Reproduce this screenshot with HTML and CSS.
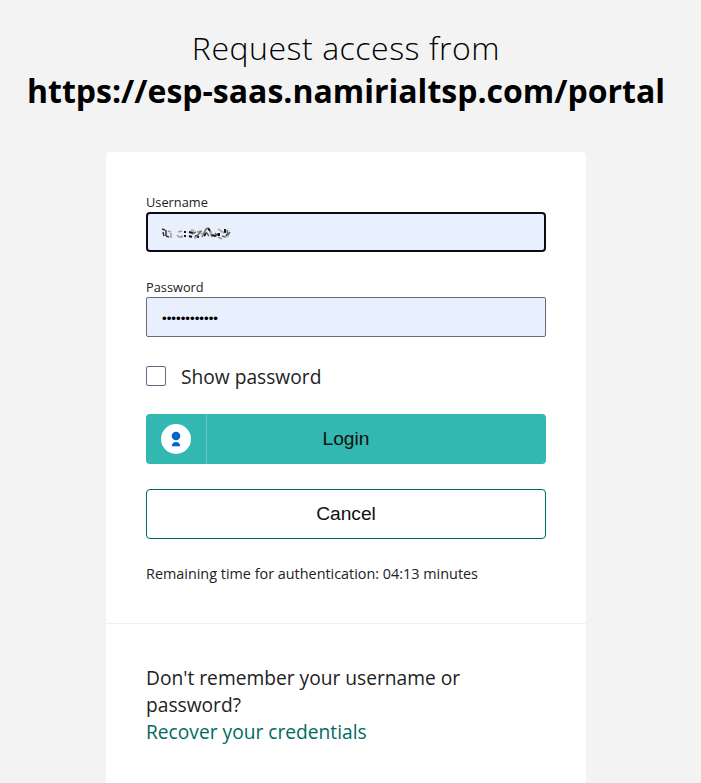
FILE: index.html
```html
<!DOCTYPE html>
<html lang="en">

<head>
  <meta charset="UTF-8">
  <meta name="viewport" content="width=device-width">
  <title>Request access</title>
  <link rel="stylesheet" href="styles.css">
</head>

<body>
  <main class="page">
    <h1 class="heading">Request access from <strong>https://esp-saas.namirialtsp.com/portal</strong></h1>
    <div class="panel">
      <form class="login">
        <label class="label" for="username">Username</label>
        <div class="field field-focus" id="username">
          <svg class="scribble" width="70" height="18" viewBox="0 0 70 18" fill="none" stroke="#333">
            <path stroke-width="1.500" d="M1 5l3 1M2 8l1 4M5 6v6M5 12l3 1"/>
            <path stroke="#999" stroke-width="1.500" d="M7 7l3 1M10 9v5M17 8l4-1M16 11l2 2 4-1M36 8l5-1M57 5l3 2M57 13l4 2"/>
            <path stroke="#111" stroke-width="2" d="M24 7v2M24 11v2M28 8l4 1M28 12l3 1M34 12l4 1M43 12l2-3M47 4l2 3M51 11l3 1 3-2M58 9v3M64 5v4M65 12l2-2"/>
            <path stroke="#666" stroke-width="1.500" d="M31 10l4-2M36 12l4-5M41 13l4-8 2-1M45 8l3 4M49 7l2 6M54 9l2 3M61 12l3 1M66 6l1 5 2-3"/>
            <path stroke="#aaa" stroke-width="2" d="M19 13h3M30 6l3 1M33 14l3-1M40 9l2 2M49 9l2-1M60 7l3 2M64 13l3-1"/>
          </svg>
        </div>
        <label class="label" for="password">Password</label>
        <input class="field" id="password" type="password" value="passwordpass">
        <label class="check"><input type="checkbox">Show password</label>
        <button class="btn btn-login" type="button">
          <span class="btn-icon">
            <svg width="30" height="30" viewBox="0 0 30 30">
              <circle cx="15" cy="15" r="15" fill="#fff"/>
              <circle cx="15" cy="12" r="4.3" fill="#06c"/>
              <path d="M10.800 22.200c0-2.500 1.600-4.300 4.200-4.300s4.200 1.800 4.200 4.300z" fill="#06c"/>
            </svg>
          </span>
          <span class="btn-text">Login</span>
        </button>
        <button class="btn btn-cancel" type="button">Cancel</button>
        <p class="remaining">Remaining time for authentication: 04:13 minutes</p>
      </form>
      <div class="recover">
        <p>Don't remember your username or password?</p>
        <a href="#">Recover your credentials</a>
      </div>
    </div>
  </main>
</body>

</html>
```
FILE: styles.css
```css
* {
  box-sizing: border-box;
}

body {
  margin: 0;
  height: 783px;
  overflow: hidden;
  background-color: #f3f3f3;
  color: #222;
  font-family: "Open Sans", sans-serif;
  font-size: 19.2px;
  line-height: 27px;
}

p {
  margin: 0;
}

.page {
  width: 692px;
}

.heading {
  margin: 26px 0 40px;
  color: #000;
  font-size: 32px;
  font-weight: 300;
  letter-spacing: 0.53px;
  line-height: 43px;
  text-align: center;
}

.heading strong {
  display: block;
  font-weight: 700;
  letter-spacing: 0;
}

.panel {
  width: 480px;
  height: 660px;
  margin: 0 auto;
  border-radius: 4px;
  background-color: #fff;
}

.login {
  display: flex;
  flex-direction: column;
  height: 472px;
  padding: 41px 40px 0;
  border-bottom: 1px solid #f0f0f0;
}

.label {
  font-size: 12.8px;
  line-height: 19px;
}

.field {
  width: 400px;
  height: 40px;
  margin: 0 0 26px;
  padding: 2px 15px 0;
  border: 1px solid #6b6b75;
  border-radius: 2px;
  background-color: #e8effd;
  color: #000;
  font: 13.333px "Liberation Sans", sans-serif;
}

.field-focus {
  padding: 10px 13px;
  border: 2px solid #0b0b16;
  border-radius: 4px;
}

.scribble {
  display: block;
}

.check {
  display: flex;
  align-items: center;
  gap: 15px;
  height: 26px;
}

.check input {
  appearance: none;
  width: 20px;
  height: 20px;
  margin: 0;
  border: 1px solid #5c6f82;
  border-radius: 2px;
}

.btn {
  flex: none;
  width: 400px;
  height: 50px;
  padding: 0;
  border-radius: 4px;
  color: #111;
  font: 19.2px "Liberation Sans", sans-serif;
}

.btn-login {
  display: flex;
  align-items: center;
  margin-top: 25px;
  border: 0;
  background-color: #33b8b1;
}

.btn-icon {
  display: flex;
  align-items: center;
  justify-content: center;
  width: 61px;
  height: 50px;
  border-right: 1px solid #66cac5;
}

.btn-text {
  flex: 1;
  padding-right: 61px;
}

.btn-cancel {
  margin-top: 25px;
  border: 1px solid #006b62;
  background-color: #fff;
}

.remaining {
  margin-top: 25px;
  font-size: 14.4px;
  line-height: 20px;
}

.recover {
  padding: 40px 40px 0;
}

.recover a {
  color: #006b62;
  text-decoration: none;
}
```
